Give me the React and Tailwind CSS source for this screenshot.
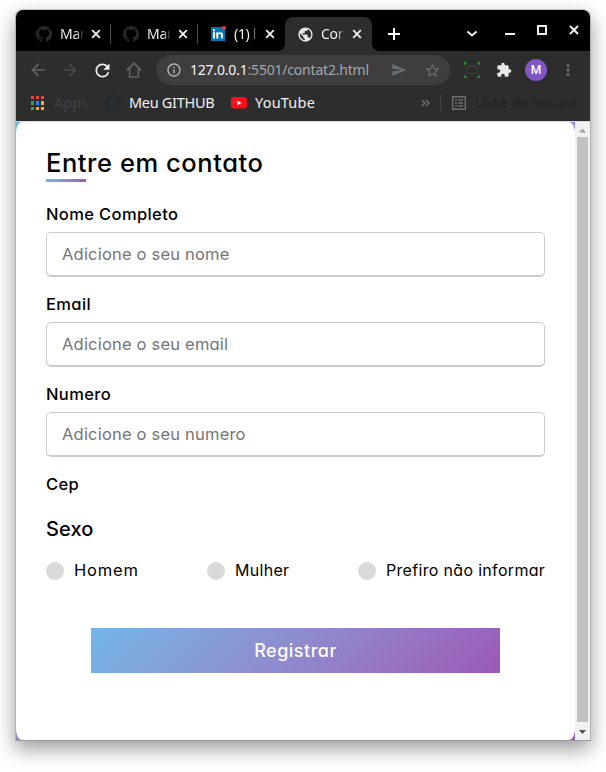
import { MdArrowBack, MdArrowForward, MdRefresh, MdInfoOutline, MdSend, MdStarBorder, MdExtension, MdMoreVert, MdPublic } from "react-icons/md";

function GithubMark() {
  return (
    <svg viewBox="0 0 16 16" className="h-4 w-4 shrink-0" fill="#24292e">
      <path d="M8 0C3.58 0 0 3.58 0 8c0 3.54 2.290 6.530 5.470 7.590.4.070.55-.17.55-.38 0-.19-.010-.82-.010-1.490-2.010.37-2.530-.49-2.690-.94-.090-.23-.48-.94-.82-1.130-.28-.15-.68-.52-.010-.53.63-.010 1.080.58 1.230.82.72 1.210 1.870.87 2.330.66.070-.52.28-.87.51-1.070-1.780-.2-3.640-.89-3.640-3.950 0-.87.31-1.590.82-2.150-.080-.2-.36-1.020.080-2.120 0 0 .67-.21 2.200.82.64-.18 1.320-.27 2-.27s1.360.090 2 .27c1.530-1.040 2.200-.82 2.200-.82.44 1.100.16 1.920.080 2.120.51.56.82 1.270.82 2.150 0 3.070-1.870 3.750-3.650 3.950.29.25.54.73.54 1.480 0 1.070-.010 1.930-.010 2.200 0 .21.15.46.55.38A8.010 8.010 0 0 0 16 8c0-4.420-3.580-8-8-8" />
    </svg>
  );
}

function Cross({ className }) {
  return (
    <svg viewBox="0 0 10 10" className={className}>
      <path d="M1.2 1.2 8.8 8.8M8.8 1.2 1.2 8.8" stroke="#f1f1f1" strokeWidth="1.8" fill="none" />
    </svg>
  );
}

function Tab({ icon, title, active, divider }) {
  return (
    <div className={"flex h-[34px] w-[87px] shrink-0 items-center pl-3 " + (active ? "relative rounded-t-[8px] bg-[#2d2d2d]" : "")}>
      <span className="flex w-4 shrink-0 justify-center">{icon}</span>
      <span className="ml-2 h-5 w-[24px] shrink-0 overflow-hidden whitespace-nowrap bg-gradient-to-r from-white from-65% to-transparent bg-clip-text text-[14px] leading-[19px] tracking-[-0.3px] text-transparent">{title}</span>
      <Cross className="ml-[7px] h-[10px] w-[10px] shrink-0" />
      {divider && <span className="ml-auto h-5 w-px bg-[#4b4b4b]" />}
      {active && (
        <>
          <svg viewBox="0 0 8 8" className="absolute bottom-0 -left-2 h-2 w-2"><path d="M8 0v8H0Q8 8 8 0" fill="#2d2d2d" /></svg>
          <svg viewBox="0 0 8 8" className="absolute -right-2 bottom-0 h-2 w-2"><path d="M0 0v8h8Q0 8 0 0" fill="#2d2d2d" /></svg>
        </>
      )}
    </div>
  );
}

function LinkedIn() {
  return (
    <span className="relative flex h-[14px] w-[14px] items-center justify-center bg-[#0077b5]">
      <svg viewBox="0 0 14 14" className="h-[14px] w-[14px]">
        <path d="M2 5.3h2v6.2H2zM2 2.3h2v2H2zM5.3 5.3h1.9v.9c1-1.6 4.8-1.5 4.8 1.6v3.7h-2V8.2c0-1.8-2.7-1.7-2.7 0v3.3h-2z" fill="#fff" />
      </svg>
      <span className="absolute -top-[1px] -right-[1px] h-[4px] w-[4px] rounded-full bg-[#e94235]" />
    </span>
  );
}

function TabStrip() {
  return (
    <div className="flex h-[41px] items-end bg-black pl-2">
      <Tab icon={<GithubMark />} title="Mar" divider />
      <Tab icon={<GithubMark />} title="Mar" divider />
      <Tab icon={<LinkedIn />} title="(1) l" />
      <Tab icon={<MdPublic className="h-[17px] w-[17px] shrink-0 text-[#e6e6e6]" />} title="Cor" active />
      <div className="flex h-[34px] w-11 items-center justify-center">
        <svg viewBox="0 0 12 12" className="h-3 w-3"><path d="M6 0v12M0 6h12" stroke="#fff" strokeWidth="2" /></svg>
      </div>
      <svg viewBox="0 0 120 20" className="mb-[11px] ml-[49px] h-5 w-[120px]" fill="none" stroke="#f1f1f1">
        <path d="m2.5 11.5 4.5 4 4.5-4" strokeWidth="2" />
        <path d="M40 14h10" strokeWidth="2" />
        <path d="M73 6h8v8h-8z" strokeWidth="2" />
        <path d="m105 6 8 8m0-8-8 8" strokeWidth="2" />
      </svg>
    </div>
  );
}

function Slot({ children }) {
  return <span className="flex w-8 shrink-0 items-center justify-center">{children}</span>;
}

function Toolbar() {
  return (
    <div className="flex h-[38px] items-center pl-1.5 text-[#5f6368]">
      <Slot><MdArrowBack className="h-5 w-5" /></Slot>
      <Slot><MdArrowForward className="h-5 w-5 text-[#484a4c]" /></Slot>
      <Slot><MdRefresh className="h-[21px] w-[21px] text-[#f0f0f0]" /></Slot>
      <Slot>
        <svg viewBox="0 0 16 16" className="h-4 w-4" fill="none" stroke="currentColor" strokeWidth="1.7">
          <path d="M.7 8.3 8 1.2l7.300 7.100M3.600 6v9h8.800V6" />
        </svg>
      </Slot>
      <div className="ml-1.5 flex h-[30px] w-[294px] shrink-0 items-center rounded-full bg-[#3e3e3e] pl-2.5">
        <MdInfoOutline className="h-4 w-4 shrink-0 text-[#b5b7b9]" />
        <span className="ml-2 whitespace-nowrap text-[14px] leading-[18px] tracking-[-0.2px] text-[#a4a7ab]"><span className="text-[#f5f5f5]">127.0.0.1</span>:5501/contat2.html</span>
        <MdSend className="mr-[17px] ml-auto h-4 w-4 shrink-0 text-[#696c6f]" />
        <MdStarBorder className="mr-[9px] h-[17px] w-[17px] shrink-0 text-[#696c6f]" />
      </div>
      <span className="w-1.5 shrink-0" />
      <Slot>
        <svg viewBox="0 0 16 16" className="h-4 w-4" fill="none">
          <path d="M3 3.5h10v8H3zM3 4.5h10" stroke="#3a3a3a" />
          <path d="M0 0h3.5L0 3.5zM16 0v3.5L12.5 0zM0 16v-3.5L3.5 16zM16 16h-3.5L16 12.5z" fill="#2f8f35" />
        </svg>
      </Slot>
      <Slot><MdExtension className="h-4 w-4 text-[#e8e8e8]" /></Slot>
      <Slot><span className="flex h-[22px] w-[22px] items-center justify-center rounded-full bg-[#7e57c2] font-[Roboto,sans-serif] text-[12px] font-medium text-white">M</span></Slot>
      <Slot><MdMoreVert className="h-[18px] w-[18px] text-[#6b6e72]" /></Slot>
    </div>
  );
}

function Bookmarks() {
  const dots = ["#ef4136", "#ef4136", "#ef4136", "#34a05a", "#2686f5", "#f9ab2b", "#34a05a", "#f9ab2b", "#f9ab2b"];
  return (
    <div className="flex h-[28px] items-center whitespace-nowrap pl-[15px] text-[14.5px]">
      <div className="grid w-[13px] shrink-0 grid-cols-[3px_3px_3px] gap-[2px]">
        {dots.map((color, i) => (
          <span key={i} className="h-[3.5px] w-[3px]" style={{ backgroundColor: color }} />
        ))}
      </div>
      <span className="ml-2.5 w-[51px] shrink-0 pb-px text-[#3e4144]">Apps</span>
      <GithubMark />
      <span className="ml-2 w-[102px] shrink-0 pb-px tracking-[-0.3px] text-[#f1f1f1]">Meu GITHUB</span>
      <svg viewBox="0 0 16 12" className="h-3 w-4 shrink-0"><rect width="16" height="11.5" rx="3" fill="#ff0d19" /><path d="M6.3 3.5v4.8L10.5 6z" fill="#fff" /></svg>
      <span className="ml-2 w-[166px] shrink-0 pb-px tracking-[0.2px] text-[#f1f1f1]">YouTube</span>
      <svg viewBox="0 0 9 8" className="h-2 w-[9px] shrink-0"><path d="m1 1 3 3-3 3M5 1l3 3-3 3" fill="none" stroke="#6b6e72" strokeWidth="1.5" /></svg>
      <span className="ml-2.5 h-4 w-px shrink-0 bg-[#414345]" />
      <svg viewBox="0 0 14 14" className="ml-[11px] h-[14px] w-[14px] shrink-0" stroke="#6b6e72" fill="none" strokeWidth="1.4"><path d="M.7.7h12.6v12.6H.7zM3 4h2m1 0h5M3 7h2m1 0h5M3 10h2m1 0h5" /></svg>
      <span className="ml-[9px] shrink-0 pb-px tracking-[0.1px] text-[#202124]">Lista de leitura</span>
    </div>
  );
}

function Field({ label, placeholder }) {
  return (
    <div className="mb-[15px]">
      <label className="block h-[30px] text-[16.5px] leading-6 font-medium tracking-[0.38px]">{label}</label>
      <input placeholder={placeholder} className="block h-[45px] w-full rounded-[5px] border border-b-2 border-[#ccc] pl-[15px] text-[16.5px] tracking-[0.2px] outline-none placeholder:text-[#757575]" />
    </div>
  );
}

function Radio({ children, className }) {
  return (
    <label className={"flex h-6 items-center whitespace-nowrap " + className}>
      <span className="mr-2.5 h-[18px] w-[18px] shrink-0 rounded-full bg-[#d9d9d9]" />
      <span className="pb-0.5 leading-[22px]">{children}</span>
    </label>
  );
}

function Page() {
  return (
    <div className="w-[559px] shrink-0 bg-linear-135 from-[#71b7e6] to-[#9b59b6]">
      <main className="h-full rounded-[6px/11px] bg-white px-[30px] pt-[22px] font-[Inter,sans-serif] text-black [font-feature-settings:'cv11']">
        <h1 className="h-[35px] text-[25.5px] leading-[37px] font-[450] tracking-[0.56px]">Entre em contato</h1>
        <div className="h-[3px] w-10 bg-linear-135 from-[#71b7e6] to-[#9b59b6]" />
        <form className="pt-5">
          <Field label="Nome Completo" placeholder="Adicione o seu nome" />
          <Field label="Email" placeholder="Adicione o seu email" />
          <Field label="Numero" placeholder="Adicione o seu numero" />
          <div className="text-[16.5px] leading-6 font-medium tracking-[0.38px]">Cep</div>
          <h2 className="mt-[18px] text-[20px] leading-[30px] font-medium tracking-[0.1px]">Sexo</h2>
          <div className="mt-[15px] flex justify-between">
            <Radio className="w-[92px] text-[16.5px] tracking-[0.8px]">Homem</Radio>
            <Radio className="w-[82px] text-[16px] tracking-[0.3px]">Mulher</Radio>
            <Radio className="w-[187px] text-[16px] tracking-[0.32px]">Prefiro não informar</Radio>
          </div>
          <button type="button" className="mx-[45px] mt-[45px] block h-[45px] w-[409px] bg-linear-135 from-[#71b7e6] to-[#9b59b6] text-[18px] font-medium tracking-[0.5px] text-white">Registrar</button>
        </form>
      </main>
    </div>
  );
}

function Scrollbar() {
  return (
    <div className="flex w-[15px] flex-col items-center bg-[#f1f1f1]">
      <svg viewBox="0 0 15 15" className="h-[15px] w-[15px] shrink-0"><path d="M4 10.500h7L7.500 6.500z" fill="#a3a3a3" /></svg>
      <div className="h-[585px] w-[11px] bg-[#c1c1c1]" />
      <svg viewBox="0 0 15 18" className="h-[18px] w-[15px] shrink-0"><path d="M4 8h7l-3.500 4z" fill="#505050" /></svg>
    </div>
  );
}

export default function App() {
  return (
    <div className="h-[772px] w-[606px] overflow-hidden bg-white pt-[9px] pl-[15px] font-['Noto_Sans',sans-serif]">
      <div className="h-[732px] w-[576px] overflow-hidden rounded-t-[8px] border border-t-[#c4c4c4] border-r-[#b3b3b3] border-b-[#9b9b9b] border-l-[#b3b3b3] shadow-[0_8px_20px_rgba(0,0,0,0.4)]">
        <TabStrip />
        <div className="h-[70px] bg-[#2d2d2d]">
          <Toolbar />
          <Bookmarks />
        </div>
        <div className="h-px bg-[#dadada]" />
        <div className="flex h-[618px]">
          <Page />
          <Scrollbar />
        </div>
      </div>
    </div>
  );
}
